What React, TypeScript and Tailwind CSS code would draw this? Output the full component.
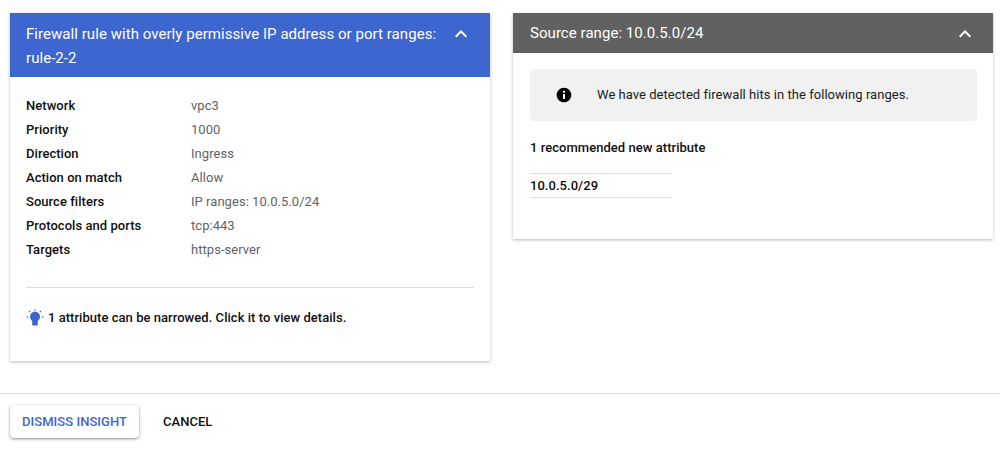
const rows = [
  ["Network", "vpc3"],
  ["Priority", "1000"],
  ["Direction", "Ingress"],
  ["Action on match", "Allow"],
  ["Source filters", "IP ranges: 10.0.5.0/24"],
  ["Protocols and ports", "tcp:443"],
  ["Targets", "https-server"],
];

function Chevron() {
  return (
    <svg width="24" height="24" viewBox="0 0 24 24" fill="white" className="shrink-0">
      <path d="M12 8l-6 6 1.41 1.41L12 10.83l4.59 4.58L18 14z" />
    </svg>
  );
}

export default function App() {
  return (
    <div className="w-[1000px] h-[450px] bg-white overflow-hidden flex flex-col font-['Roboto',sans-serif] text-[13px] leading-[24px] tracking-[0.04px] text-[#202124]">
      <div className="h-[393px] flex items-start pt-[13px] pl-[10px] gap-[23px]">
        <section className="w-[480px] h-[348px] bg-white shadow-[0_1px_3px_rgba(60,64,67,0.35)] flex flex-col">
          <header className="h-[64px] bg-[#3d66cf] text-white text-[15px] tracking-[0.05px] pl-[16px] pr-[16px] pt-[9px] flex items-start justify-between">
            <span className="w-[425px] leading-[24px]">Firewall rule with overly permissive IP address or port ranges: rule-2-2</span>
            <span className="mr-[1px]"><Chevron /></span>
          </header>
          <div className="px-[16px] pt-[17px]">
            {rows.map(([k, v]) => (
              <div key={k} className="flex h-[24px]">
                <span className="w-[165px] font-medium text-[#0f0f0f]">{k}</span>
                <span className="text-[#5f6368]">{v}</span>
              </div>
            ))}
            <div className="h-px bg-[#dadce0] mt-[25px] mr-0" />
            <div className="flex items-center mt-[18px] h-[24px] font-medium text-[#0f0f0f]">
              <svg width="18" height="18" viewBox="0 0 18 18" className="mr-[4px] shrink-0" fill="#3d66cf">
                <circle cx="9" cy="7.8" r="5" />
                <rect x="6.2" y="11" width="5.6" height="5.4" rx="1" />
                <rect x="8.4" y="0.4" width="1.2" height="1.5" />
                <rect x="0.6" y="7.3" width="1.6" height="1.2" />
                <rect x="15.8" y="7.3" width="1.6" height="1.2" />
                <rect x="3" y="1.8" width="1.2" height="1.6" transform="rotate(-45 3.6 2.6)" />
                <rect x="13.8" y="1.8" width="1.2" height="1.6" transform="rotate(45 14.4 2.6)" />
              </svg>
              <span>1 attribute can be narrowed. Click it to view details.</span>
            </div>
          </div>
        </section>
        <section className="w-[480px] h-[226px] bg-white shadow-[0_1px_3px_rgba(60,64,67,0.35)] flex flex-col">
          <header className="h-[40px] bg-[#616161] text-white text-[15px] tracking-[0.05px] pl-[17px] pr-[16px] flex items-center justify-between">
            <span>Source range: 10.0.5.0/24</span>
            <span className="translate-y-[1px]"><Chevron /></span>
          </header>
          <div className="px-[17px] pt-[16px]">
            <div className="h-[52px] w-[447px] bg-[#f1f1f1] rounded-[4px] flex items-center pl-[26px] text-[#202124]">
              <svg width="16" height="16" viewBox="0 0 24 24" className="mr-[25px] shrink-0" fill="#000">
                <path d="M12 1C5.9 1 1 5.9 1 12s4.9 11 11 11 11-4.9 11-11S18.1 1 12 1zm1.5 17h-3v-7.5h3V18zm0-9.5h-3v-3h3v3z" />
              </svg>
              <span>We have detected firewall hits in the following ranges.</span>
            </div>
            <div className="mt-[15px] font-medium text-[#0f0f0f]">1 recommended new attribute</div>
            <div className="mt-[13px] w-[141px] h-[25px] border-y border-[#dadce0] font-medium text-[#0f0f0f] flex items-center">10.0.5.0/29</div>
          </div>
        </section>
      </div>
      <footer className="h-[57px] border-t border-[#e0e0e0] flex items-start pl-[10px] pt-[11px]">
        <button className="w-[129px] h-[33px] bg-white rounded-[4px] shadow-[0_1px_3px_rgba(60,64,67,0.6)] text-[#3d66cf] font-medium text-[13px]">DISMISS INSIGHT</button>
        <button className="ml-[24px] h-[33px] text-[#0f0f0f] font-medium text-[13px]">CANCEL</button>
      </footer>
    </div>
  );
}
